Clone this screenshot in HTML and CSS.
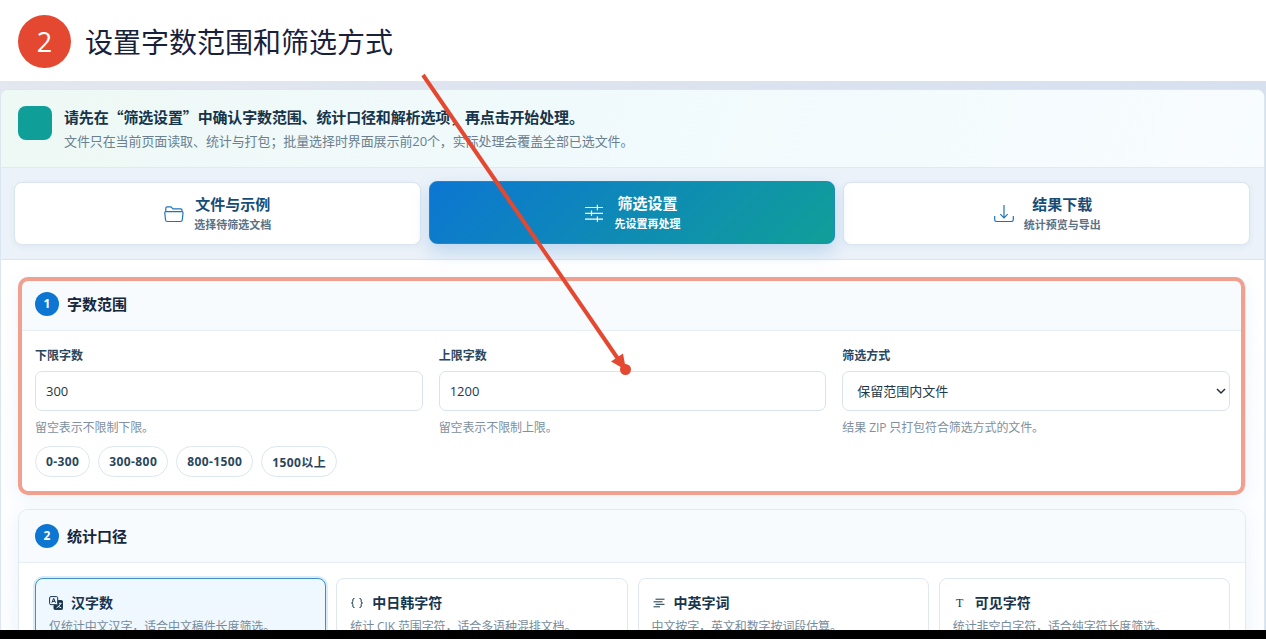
FILE: index.html
```
<!DOCTYPE html>
<html lang="zh-CN">

<head>
    <meta charset="UTF-8">
    <meta name="viewport" content="width=device-width, initial-scale=1.0">
    <title>设置字数范围和筛选方式</title>
    <link rel="stylesheet" href="styles.css">
</head>

<body>
    <header class="step-header">
        <span class="step-number">2</span>
        <h1>设置字数范围和筛选方式</h1>
    </header>

    <main class="screen">
        <div class="panel">
            <div class="notice">
                <span class="notice-icon"></span>
                <div class="notice-body">
                    <div class="notice-title">请先在“筛选设置”中确认字数范围、统计口径和解析选项，再点击开始处理。</div>
                    <div class="notice-text">文件只在当前页面读取、统计与打包；批量选择时界面展示前20个，实际处理会覆盖全部已选文件。</div>
                </div>
            </div>

            <nav class="tabs">
                <button class="tab">
                    <svg width="20" height="20" viewBox="0 0 20 20">
                        <path d="M1.8 8V4.2Q1.8 2.8 3.2 2.8H7L9 4.8H16.6Q18 4.8 18 6.2V8M2 7.6H17.8Q19.1 7.6 19 9L18.3 15.8Q18.2 17.5 16.6 17.5H3.2Q1.7 17.5 1.5 15.8L.8 9Q.7 7.6 2 7.6Z" />
                    </svg>
                    <span class="tab-label"><strong>文件与示例</strong><small>选择待筛选文档</small></span>
                </button>
                <button class="tab active">
                    <svg width="20" height="20" viewBox="0 0 20 20">
                        <path d="M1 4.5H19M1 10.3H19M1 16.2H19M13.4 1.7V7.3M7.5 7.5V13.1M13.4 13.4V19" />
                    </svg>
                    <span class="tab-label"><strong>筛选设置</strong><small>先设置再处理</small></span>
                </button>
                <button class="tab">
                    <svg width="20" height="20" viewBox="0 0 20 20">
                        <path d="M.7 12V15.8Q.7 17.5 2.4 17.5H17.6Q19.3 17.5 19.3 15.8V12M10 1V13.8M6.3 10.2L10 13.9L13.7 10.2" />
                    </svg>
                    <span class="tab-label"><strong>结果下载</strong><small>统计预览与导出</small></span>
                </button>
            </nav>

            <div class="content">
                <section class="card highlight">
                    <h2 class="card-title"><span class="badge">1</span>字数范围</h2>
                    <div class="fields">
                        <div class="field">
                            <label for="minWords">下限字数</label>
                            <input id="minWords" type="text" value="300">
                            <p class="help">留空表示不限制下限。</p>
                            <div class="presets">
                                <button>0-300</button>
                                <button>300-800</button>
                                <button>800-1500</button>
                                <button>1500以上</button>
                            </div>
                        </div>
                        <div class="field">
                            <label for="maxWords">上限字数</label>
                            <input id="maxWords" type="text" value="1200">
                            <p class="help">留空表示不限制上限。</p>
                        </div>
                        <div class="field">
                            <label for="filterMode">筛选方式</label>
                            <div class="select-wrap">
                                <select id="filterMode">
                                    <option>保留范围内文件</option>
                                </select>
                                <svg class="chevron" width="10" height="7" viewBox="0 0 10 7">
                                    <path d="M1 1L5 5L9 1" />
                                </svg>
                            </div>
                            <p class="help">结果 ZIP 只打包符合筛选方式的文件。</p>
                        </div>
                    </div>
                </section>

                <section class="card">
                    <h2 class="card-title"><span class="badge">2</span>统计口径</h2>
                    <div class="options">
                        <div class="option selected">
                            <div class="option-title">
                                <svg width="14" height="14" viewBox="0 0 14 14">
                                    <path class="solid" d="M9.2 4.6H12.5Q13.6 4.6 13.6 5.7V12.5Q13.6 13.6 12.5 13.6H6.2Q5 13.6 5 12.5V9.3H8Q9.2 9.3 9.2 8.1Z" />
                                    <path d="M2 .6H7.5Q8.7.6 8.7 1.8V7.4Q8.7 8.7 7.5 8.7H2Q.6 8.7.6 7.4V1.8Q.6.6 2 .6ZM2.9 6.7L4.7 2.4L6.5 6.7M3.5 5.4H5.9" />
                                    <path class="light" d="M10 7.3H12.6M11.8 7.3Q10.8 10.6 7.6 11.8M8.9 9.9Q10.3 11.3 12.3 11.9" />
                                </svg>
                                汉字数
                            </div>
                            <p>仅统计中文汉字，适合中文稿件长度筛选。</p>
                        </div>
                        <div class="option">
                            <div class="option-title">
                                <svg width="14" height="14" viewBox="0 0 14 14">
                                    <path d="M4.5 2.5Q2.8 2.3 2.8 4V5.6Q2.8 7 1.5 7Q2.8 7 2.8 8.4V10Q2.8 11.7 4.5 11.5M9.5 2.5Q11.2 2.3 11.2 4V5.6Q11.2 7 12.5 7Q11.2 7 11.2 8.4V10Q11.2 11.7 9.5 11.5" />
                                </svg>
                                中日韩字符
                            </div>
                            <p>统计 CJK 范围字符，适合多语种混排文档。</p>
                        </div>
                        <div class="option">
                            <div class="option-title">
                                <svg width="14" height="14" viewBox="0 0 14 14">
                                    <path d="M3.5 3.2H12.5M1.5 5.8H10.5M3.5 8.3H12.5M1.5 10.8H8" />
                                </svg>
                                中英字词
                            </div>
                            <p>中文按字，英文和数字按词段估算。</p>
                        </div>
                        <div class="option">
                            <div class="option-title">
                                <span class="letter-icon">T</span>
                                可见字符
                            </div>
                            <p>统计非空白字符，适合纯字符长度筛选。</p>
                        </div>
                    </div>
                </section>
            </div>
        </div>
    </main>

    <footer class="bottom-bar"></footer>

    <!-- 指向上限字数输入框的箭头 -->
    <svg class="pointer" width="1266" height="639" viewBox="0 0 1266 639">
        <path class="pointer-line" d="M423 75L625 369" />
        <path class="pointer-head" d="M626 370L611 361.5L623 353.5Z" />
        <circle class="pointer-head" cx="625.5" cy="369.5" r="5.5" />
    </svg>
</body>

</html>
```
FILE: styles.css
```
* {
    box-sizing: border-box;
}

body {
    margin: 0;
    height: 639px;
    overflow: hidden;
    display: flex;
    flex-direction: column;
    position: relative;
    font-family: "Open Sans", "Noto Sans CJK SC", sans-serif;
    color: #183448;
    background: #fff;
}

h1,
h2,
p {
    margin: 0;
}

button,
input,
select {
    font-family: inherit;
}

svg {
    fill: none;
    stroke: currentColor;
    flex-shrink: 0;
}

/* 顶部步骤标题 */
.step-header {
    height: 81px;
    flex-shrink: 0;
    display: flex;
    align-items: center;
    gap: 14px;
    padding: 2px 18px 0;
}

.step-number {
    width: 53px;
    height: 53px;
    border-radius: 50%;
    background: #e54830;
    color: #fff;
    font-size: 27px;
    line-height: 53px;
    text-align: center;
}

.step-header h1 {
    padding-bottom: 2px;
    font-family: "Noto Sans CJK SC", sans-serif;
    font-size: 28px;
    line-height: 40px;
    font-weight: 400;
    color: #18213a;
}

.screen {
    flex: 1;
    min-height: 0;
    overflow: hidden;
    padding: 8px 1px 0 0;
    background: linear-gradient(90deg, #e3e7ef, #d6e0ef);
}

.panel {
    height: 560px;
    border: 1px solid #dce6f0;
    border-radius: 8px;
    overflow: hidden;
    background: #fff;
}

/* 提示条 */
.notice {
    height: 78px;
    display: flex;
    gap: 12px;
    padding: 16px 17px;
    border-bottom: 1px solid #e0eaf1;
    background: linear-gradient(110deg, #eef9f5, #f0fafc 45%, #f8fcff);
}

.notice-icon {
    width: 34px;
    height: 34px;
    border-radius: 8px;
    background: #109e98;
}

.notice-body {
    margin-top: -1px;
}

.notice-title {
    font-family: "Noto Sans CJK SC", sans-serif;
    font-size: 15px;
    font-weight: 700;
    line-height: 24px;
    letter-spacing: -0.15px;
    color: #16344a;
}

.notice-text {
    font-size: 13px;
    line-height: 24px;
    letter-spacing: -0.1px;
    color: #6b7f90;
}

/* 标签页 */
.tabs {
    height: 92px;
    display: grid;
    grid-template-columns: repeat(3, 1fr);
    gap: 8px;
    padding: 14px 14px 14px 13px;
    border-bottom: 1px solid #d8e6f2;
    background: #ebf2f9;
}

.tab {
    height: 63px;
    display: flex;
    align-items: center;
    justify-content: center;
    gap: 10px;
    padding: 0 0 0 1px;
    border: 1px solid #dae5ef;
    border-radius: 8px;
    background: #fff;
    color: #1f74b8;
    box-shadow: 0 2px 6px rgba(40, 90, 140, 0.06);
}

.tab svg {
    stroke-width: 1.2;
}

.tab-label {
    display: flex;
    flex-direction: column;
    align-items: center;
}

.tab strong {
    font-size: 15px;
    line-height: 22px;
    color: #164d78;
}

.tab small {
    font-size: 11px;
    line-height: 20px;
    font-weight: 600;
    color: #5b7185;
}

.tab.active {
    border-color: #2487c5;
    background: linear-gradient(135deg, #0c76d2, #109f98);
    color: #fff;
    transform: translateY(-1px);
    box-shadow: 0 8px 18px rgba(30, 120, 205, 0.22);
}

.tab.active strong,
.tab.active small {
    color: #fff;
}

.tab.active small {
    font-weight: 700;
}

.content {
    padding: 17px 18px 0 17px;
    background: linear-gradient(#fff, #fbfdff);
}

.card {
    position: relative;
    margin-bottom: 16px;
    border: 1px solid #e1eaf2;
    border-radius: 10px;
    background: #fff;
    box-shadow: 0 5px 18px rgba(50, 100, 150, 0.08);
}

.highlight {
    height: 216px;
}

.highlight::after {
    content: "";
    position: absolute;
    inset: -1px 0 -3px -1px;
    border: 4px solid #f1a090;
    border-radius: 10px;
    pointer-events: none;
}

.card-title {
    height: 53px;
    display: flex;
    align-items: center;
    gap: 8px;
    padding: 0 16px 1px;
    border-bottom: 1px solid #e7eff5;
    border-radius: 9px 9px 0 0;
    background: #f7fbfe;
    font-size: 15px;
    color: #17253b;
}

.badge {
    width: 24px;
    height: 24px;
    border-radius: 50%;
    background: #0c76d2;
    color: #fff;
    font-size: 12px;
    line-height: 24px;
    text-align: center;
}

.fields {
    display: grid;
    grid-template-columns: repeat(3, 1fr);
    gap: 16px;
    padding: 15px 15px 0 16px;
}

.field label {
    display: block;
    font-size: 12px;
    font-weight: 700;
    line-height: 20px;
    color: #29465d;
}

.field input,
.field select {
    display: block;
    width: 100%;
    height: 40px;
    padding: 0 10px;
    border: 1px solid #dae3ec;
    border-radius: 7px;
    background: #fff;
    color: #23384a;
    font-size: 13px;
    appearance: none;
}

.field input,
.select-wrap {
    margin-top: 5px;
}

.field select {
    padding-left: 14px;
}

.select-wrap {
    position: relative;
}

.chevron {
    position: absolute;
    right: 4px;
    top: 17px;
    stroke: #26323e;
    stroke-width: 1.5;
}

.help {
    margin-top: 7px;
    font-size: 12px;
    line-height: 20px;
    letter-spacing: -0.1px;
    color: #8090a0;
}

.presets {
    display: flex;
    gap: 8px;
    margin-top: 8px;
}

.presets button {
    height: 31px;
    padding: 0 10px;
    border: 1px solid #dce7f0;
    border-radius: 16px;
    background: #fff;
    color: #29465d;
    font-size: 12px;
    font-weight: 700;
    letter-spacing: 0.4px;
    white-space: nowrap;
}

/* 统计口径选项 */
.options {
    display: grid;
    grid-template-columns: repeat(4, 1fr);
    gap: 10px;
    padding: 15px 15px 20px 16px;
}

.option {
    height: 80px;
    padding: 13px 13px;
    border: 1px solid #dfe8ef;
    border-radius: 8px;
    background: #fff;
}

.option.selected {
    border-color: #3e91c2;
    background: #eff8ff;
    box-shadow: 0 0 0 2px #d8ecfa;
}

.option-title {
    display: flex;
    align-items: center;
    gap: 8px;
    font-size: 14px;
    font-weight: 700;
    line-height: 22px;
    color: #16344c;
}

.option-title .solid {
    fill: currentColor;
}

.option-title .light {
    stroke: #eff8ff;
}

.letter-icon {
    width: 14px;
    font-family: "Liberation Serif", serif;
    font-size: 12px;
    font-weight: 400;
    text-align: center;
}

.option p {
    margin-top: 3px;
    font-size: 12px;
    line-height: 20px;
    letter-spacing: -0.1px;
    white-space: nowrap;
    color: #778b9c;
}

.bottom-bar {
    height: 9px;
    flex-shrink: 0;
    background: #000;
}

.pointer {
    position: absolute;
    left: 0;
    top: 0;
    pointer-events: none;
}

.pointer-line {
    stroke: #e54830;
    stroke-width: 4;
}

.pointer-head {
    fill: #e54830;
    stroke: none;
}
```
